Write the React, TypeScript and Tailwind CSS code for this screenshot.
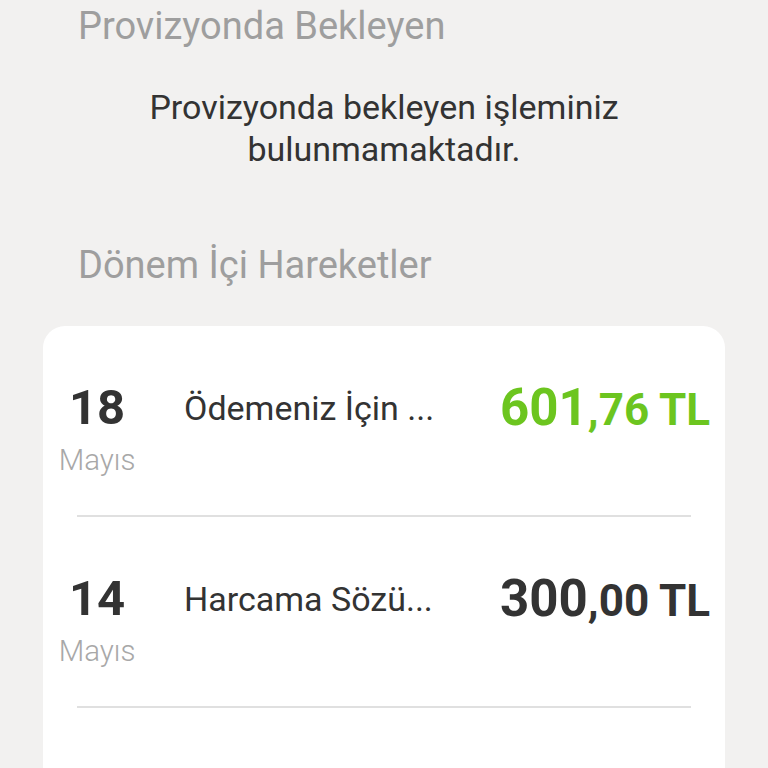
const rows = [
  { day: "18", month: "Mayıs", title: "Ödemeniz İçin ...", whole: "601", frac: ",76 TL", green: true },
  { day: "14", month: "Mayıs", title: "Harcama Sözü...", whole: "300", frac: ",00 TL", green: false },
];

export default function App() {
  return (
    <div className="min-h-screen bg-[#f2f1f0] font-['Roboto',sans-serif] overflow-hidden h-[768px]">
      {/* Provizyon */}
      <div className="pl-[78px] pt-[3px]">
        <h2 className="text-[38px] leading-[46px] text-[#9e9e9e]">Provizyonda Bekleyen</h2>
      </div>
      <p className="mt-[37px] text-center text-[34px] leading-[42px] text-[#333333] px-[130px]">
        Provizyonda bekleyen işleminiz bulunmamaktadır.
      </p>

      {/* Dönem içi */}
      <div className="pl-[78px] mt-[72px]">
        <h2 className="text-[38px] leading-[46px] text-[#9e9e9e]">Dönem İçi Hareketler</h2>
      </div>

      <div className="mx-[43px] mt-[38px] bg-white rounded-[22px] px-[17px] pt-[56px] pb-[60px]">
        {rows.map((r) => (
          <div key={r.day}>
            <div className="flex items-start h-[133px]">
              <div className="w-[74px] flex flex-col items-center">
                <span className="text-[49px] leading-[52px] font-bold text-[#333333]">{r.day}</span>
                <span className="text-[29.5px] leading-[30px] font-light text-[#a8a8a8] mt-[11px]">{r.month}</span>
              </div>
              <div className="ml-[50px] flex-1 text-[34px] leading-[52px] text-[#333333]">{r.title}</div>
              <div className={"font-bold leading-[52px] mr-[-2px] " + (r.green ? "text-[#6cc51f]" : "text-[#333333]")}>
                <span className="text-[51px]">{r.whole}</span>
                <span className="text-[44px]">{r.frac}</span>
              </div>
            </div>
            <div className="mx-[17px] h-[2px] bg-[#e0e0e0] mb-[56px]" />
          </div>
        ))}
      </div>
    </div>
  );
}
